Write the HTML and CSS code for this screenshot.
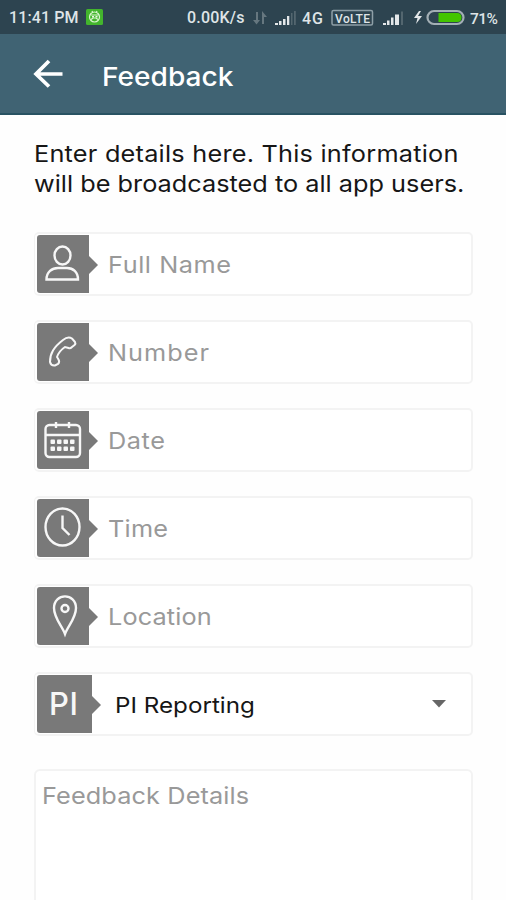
FILE: index.html
```
<!DOCTYPE html>
<html lang="en">
<head>
<meta charset="utf-8">
<title>Feedback</title>
<link rel="stylesheet" href="styles.css">
</head>
<body>
<div class="status">
  <span class="clock">11:41 PM</span>
  <svg class="app" width="17" height="16" viewBox="0 0 17 16"><rect width="17" height="16" rx="1.5" fill="#43b52d"/><g fill="none" stroke="#d9f5cf" stroke-width="1.2"><circle cx="8.5" cy="8" r="5"/><path d="M4.5 6h8M5 10.5l2-1.5h3l2 1.5M6 2l1 2M11 2l-1 2"/></g><path d="M6 7h2v1.500H6zM9.500 7h2v1.500h-2z" fill="#e8f9e2"/></svg>
  <span class="speed">0.00K/s</span>
  <svg class="system" width="253" height="34" viewBox="253 0 253 34">
    <g fill="#66777f"><path d="M256 12h2v8h2l-3.500 4.500L253 20h3zM262 24V11l5 6h-3v7z"/></g>
    <g fill="#e3e7e9"><path d="M275 23h3v2h-3zM279 21h2.500v4H279zM283 19h2.500v6H283zM287 16h2.300v9H287z"/><path d="M383 23h3v2h-3zM387 20.500h2.500V25H387zM391 17.500h2.500V25H391zM395 14.500h4V25h-4z"/><path d="M419 11l-5 7h3.500l-1.500 6 6-8h-4l3-5z"/></g>
    <g fill="#53666f"><path d="M291 13h1.500v12H291zM294 11h1.800v14H294zM401 11.500h2V25h-2z"/></g>
    <rect x="332" y="10.500" width="40.500" height="14.500" rx="1.500" fill="none" stroke="#8e9fa7" stroke-width="1.500"/>
    <rect x="427.500" y="11" width="36" height="13" rx="6.500" fill="#2d4450" stroke="#a3afb5" stroke-width="2.200"/>
    <path d="M438.500 13H457q4.500 0 4.500 4.500T457 22h-18.500z" fill="#43c500"/>
    <g class="system-text"><text x="302" y="24" font-size="16" textLength="21">4G</text><text x="335" y="22.500" font-size="12" textLength="35">VoLTE</text><text x="470" y="24" font-size="15.500" textLength="28">71%</text></g>
  </svg>
</div>
<header class="bar">
  <svg width="32" height="30" viewBox="0 0 32 30"><path d="M29.500 15H3M16 2L3 15l13 12.500" fill="none" stroke="#fff" stroke-width="3.700"/></svg>
  <h1>Feedback</h1>
</header>
<main>
  <p class="intro"><span class="line-one">Enter details here. This information</span><br><span class="line-two">will be broadcasted to all app users.</span></p>
  <div class="field"><div class="tag"><svg width="52" height="58" viewBox="0 0 52 58"><ellipse cx="25.500" cy="21.500" rx="8" ry="9"/><path d="M9.500 45.500C9.500 38 15 34 21 34h9c6 0 11 4 11 11.500z"/></svg></div><span class="name">Full Name</span></div>
  <div class="field"><div class="tag"><svg width="52" height="58" viewBox="0 0 52 58"><path class="thin" d="M38 20L35 16.500Q31 14 26 18C17 25 13 31 13 40Q14 44 18 43.500L21 42Q23 40 21.500 37.500L20 35Q22 29 28 25L31.500 26Q33 27 35 25L37.500 23Q39 21.500 38 20z"/></svg></div><span class="number">Number</span></div>
  <div class="field"><div class="tag"><svg width="52" height="58" viewBox="0 0 52 58"><rect x="8.500" y="15" width="34.500" height="32" rx="4"/><path d="M8 25h35M19 12v6M32 12v6"/><g class="dots"><rect x="13.500" y="29.500" width="4.500" height="4.500" rx="1"/><rect x="20" y="29.500" width="4.500" height="4.500" rx="1"/><rect x="26.500" y="29.500" width="4.500" height="4.500" rx="1"/><rect x="33" y="29.500" width="4.500" height="4.500" rx="1"/><rect x="13.500" y="36.500" width="4.500" height="4.500" rx="1"/><rect x="20" y="36.500" width="4.500" height="4.500" rx="1"/><rect x="26.500" y="36.500" width="4.500" height="4.500" rx="1"/><rect x="33" y="36.500" width="4.500" height="4.500" rx="1"/></g></svg></div><span class="date">Date</span></div>
  <div class="field"><div class="tag"><svg width="52" height="58" viewBox="0 0 52 58"><ellipse cx="25.500" cy="29" rx="17" ry="18.500"/><path d="M25.500 17.500v12.500l7 7"/></svg></div><span class="time">Time</span></div>
  <div class="field"><div class="tag"><svg width="52" height="58" viewBox="0 0 52 58"><path d="M28 48C25 40 17 32 17 22C17 6.500 39 6.500 39 22C39 32 31 40 28 48z"/><circle cx="28" cy="22.500" r="3.500"/></svg></div><span class="location">Location</span></div>
  <div class="field select"><div class="tag wide"><b>PI</b></div><span class="reporting">PI Reporting</span><svg class="caret" width="14" height="8" viewBox="0 0 14 8"><path d="M0 0h14L7 7.500z"/></svg></div>
  <div class="details"><span>Feedback Details</span></div>
</main>
</body>
</html>
```
FILE: styles.css
```
* { box-sizing: border-box; }
body { margin: 0; height: 900px; overflow: hidden; background: #fefefe; font-family: Inter, sans-serif; }
.status { display: flex; align-items: center; width: 506px; height: 34px; padding-left: 9px; background: #2d4450; color: #dfe4e7; font: 500 16px/34px Roboto, sans-serif; }
.status span { padding-top: 2px; white-space: nowrap; }
.clock { width: 77px; letter-spacing: .1px; }
.speed { width: 66px; margin-left: auto; letter-spacing: .2px; }
.system { flex: none; }
.system-text { fill: #dfe4e7; font-weight: 500; }
.bar { display: flex; align-items: center; height: 81px; padding-left: 33px; background: #406373; border-bottom: 2px solid #285262; color: #fff; }
.bar h1 { margin: 7px 0 0 37px; font-size: 26px; font-weight: 500; line-height: 32px; letter-spacing: 0; transform: scaleX(1.08); transform-origin: left; }
main { padding: 24px 33px 0 34px; }
.intro { height: 60px; margin: 0 0 33px; color: #161616; font-size: 23px; line-height: 30px; white-space: nowrap; }
.intro span, .field > span, .details span { display: inline-block; transform: scaleX(1.1); transform-origin: left; }
.line-one { letter-spacing: .2px; }
.line-two { letter-spacing: 0; }
.field { display: flex; align-items: center; height: 64px; margin-bottom: 24px; padding: 0 0 0 2px; border: 2px solid #f3f3f3; border-left-width: 1px; border-radius: 5px; background: #fff; color: #999; font-size: 23px; }
.field > span { margin: 1px 0 0 19px; }
.name { letter-spacing: .5px; }
.number { letter-spacing: .9px; }
.date { letter-spacing: .5px; }
.time { letter-spacing: .2px; }
.location { letter-spacing: .1px; }
.tag { position: relative; flex: none; width: 52px; height: 58px; background: #797979; border-radius: 3px 0 0 3px; }
.tag::after { content: ""; position: absolute; left: 100%; top: 21px; border-left: 9px solid #797979; border-top: 9px solid transparent; border-bottom: 9px solid transparent; }
.tag svg { display: block; margin-top: -1px; fill: none; stroke: #f7f7f7; stroke-width: 2.4; }
.tag .thin { stroke-width: 2; }
.tag .dots { fill: #f7f7f7; stroke: none; }
.wide { width: 55px; }
.tag b { display: block; padding-left: 12px; color: #f7f7f7; font-size: 31px; font-weight: 500; line-height: 58px; letter-spacing: .5px; }
.field .reporting { margin-left: 23px; color: #161616; font-size: 22px; }
.caret { margin: 0 25px 1px auto; fill: #666; }
.details { height: 150px; margin-top: 33px; padding: 10px 6px; border: 2px solid #f3f3f3; border-radius: 6px; background: #fff; color: #999; font-size: 23px; line-height: 30px; letter-spacing: .1px; }
```
